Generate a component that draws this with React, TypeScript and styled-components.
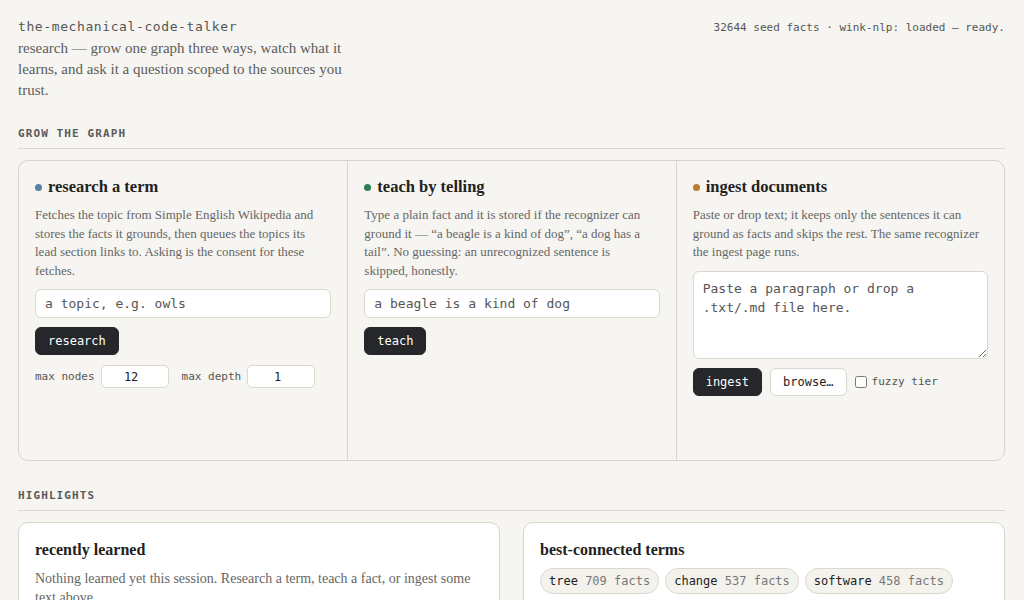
import * as React from 'react';
import styled, { createGlobalStyle } from 'styled-components';

const Global = createGlobalStyle`
  html, body {
    margin: 0;
    background: #f6f5f1;
  }
  body {
    font-family: "Liberation Serif", serif;
    color: #2a2a2a;
  }
`;

const MONO = `"DejaVu Sans Mono", monospace`;
const SERIF = `"Liberation Serif", serif`;

const Page = styled.div`
  padding: 18px 19px 0 18px;
`;

const Header = styled.header`
  display: flex;
  justify-content: space-between;
  align-items: flex-start;
`;

const Brand = styled.div`
  max-width: 340px;
`;

const Title = styled.div`
  font-family: ${MONO};
  font-size: 13px;
  color: #555;
  letter-spacing: 0.6px;
  line-height: 17px;
`;

const Lede = styled.p`
  margin: 3px 0 0;
  font-family: ${SERIF};
  font-size: 15px;
  line-height: 21px;
  color: #5c5c5c;
`;

const Status = styled.div`
  font-family: ${MONO};
  font-size: 11px;
  color: #555;
  padding-top: 3px;
`;

const SectionHead = styled.h2`
  margin: 0;
  font-family: ${MONO};
  font-size: 11px;
  font-weight: 700;
  letter-spacing: 1.1px;
  color: #5a5a5a;
  padding-bottom: 8px;
  border-bottom: 1px solid #dcd7cf;
`;

const Grow = styled.section`
  margin-top: 26px;
`;

const Panels = styled.div`
  margin-top: 11px;
  display: grid;
  grid-template-columns: repeat(3, 1fr);
  border: 1px solid #dad5cc;
  border-radius: 10px;
  height: 301px;
  box-sizing: border-box;
`;

const Panel = styled.div`
  padding: 16px 16px;
  border-left: 1px solid #dad5cc;
  &:first-child {
    border-left: none;
  }
`;

const PanelTitle = styled.h3`
  margin: 0;
  font-family: ${SERIF};
  font-size: 16.5px;
  font-weight: 700;
  color: #222;
  display: flex;
  align-items: center;
  gap: 6px;
  line-height: 20px;
`;

const Dot = styled.span<{ $c: string }>`
  width: 7px;
  height: 7px;
  border-radius: 50%;
  background: ${p => p.$c};
  display: inline-block;
`;

const Desc = styled.p<{ $measure?: number }>`
  margin: 9px 0 0;
  max-width: ${p => (p.$measure ? `${p.$measure}px` : 'none')};
  font-family: ${SERIF};
  font-size: 13px;
  line-height: 18.6px;
  color: #666;
`;

const Field = styled.input`
  display: block;
  margin-top: 9px;
  width: 100%;
  box-sizing: border-box;
  height: 29px;
  padding: 0 9px;
  border: 1px solid #dcd7cf;
  border-radius: 6px;
  background: #fff;
  font-family: ${MONO};
  font-size: 13px;
  color: #333;
  &::placeholder {
    color: #555;
  }
`;

const Area = styled.textarea`
  display: block;
  margin-top: 9px;
  width: 100%;
  box-sizing: border-box;
  height: 88px;
  padding: 7px 9px;
  border: 1px solid #dcd7cf;
  border-radius: 6px;
  background: #fff;
  font-family: ${MONO};
  font-size: 13px;
  line-height: 19px;
  resize: vertical;
  &::placeholder {
    color: #555;
  }
`;

const Row = styled.div`
  display: flex;
  align-items: center;
  gap: 8px;
  margin-top: 9px;
`;

const Btn = styled.button<{ $ghost?: boolean }>`
  height: 28px;
  padding: 0 12px;
  border-radius: 6px;
  font-family: ${MONO};
  font-size: 12px;
  font-weight: 400;
  cursor: pointer;
  border: 1px solid ${p => (p.$ghost ? '#dcd7cf' : '#25272b')};
  background: ${p => (p.$ghost ? '#fff' : '#25272b')};
  color: ${p => (p.$ghost ? '#222' : '#fff')};
`;

const Knobs = styled.div`
  display: flex;
  align-items: center;
  margin-top: 10px;
`;

const Knob = styled.label`
  display: flex;
  align-items: center;
  gap: 6px;
  font-family: ${MONO};
  font-size: 11px;
  color: #555;
  & + & {
    margin-left: 13px;
  }
`;

const Num = styled.input`
  width: 68px;
  height: 23px;
  box-sizing: border-box;
  border: 1px solid #dcd7cf;
  border-radius: 5px;
  background: #fff;
  text-align: center;
  font-family: ${MONO};
  font-size: 12px;
  color: #222;
  padding: 0 0 0 8px;
`;

const Check = styled.label`
  display: flex;
  align-items: center;
  gap: 5px;
  font-family: ${MONO};
  font-size: 11px;
  color: #555;
  input {
    margin: 0;
    width: 12px;
    height: 12px;
  }
`;

const Highlights = styled.section`
  margin-top: 28px;
`;

const Cards = styled.div`
  margin-top: 11px;
  display: grid;
  grid-template-columns: 1fr 1fr;
  gap: 23px;
`;

const Card = styled.div`
  background: #fff;
  border: 1px solid #dad5cc;
  border-radius: 10px;
  padding: 17px 16px 16px;
  min-height: 90px;
`;

const CardTitle = styled.h3`
  margin: 0;
  font-family: ${SERIF};
  font-size: 16px;
  font-weight: 700;
  color: #222;
  line-height: 20px;
`;

const CardText = styled.p`
  margin: 9px 0 0;
  font-family: ${SERIF};
  font-size: 14px;
  line-height: 19px;
  color: #666;
`;

const Chips = styled.div`
  display: flex;
  flex-wrap: wrap;
  gap: 6px;
  margin-top: 8px;
`;

const Chip = styled.span`
  display: inline-flex;
  align-items: center;
  height: 26px;
  padding: 0 8px;
  box-sizing: border-box;
  border: 1px solid #dcd7cf;
  border-radius: 13px;
  background: #f4f2ed;
  font-family: ${MONO};
  font-size: 12px;
  color: #222;
  white-space: pre;
  em {
    font-style: normal;
    color: #777;
  }
`;

const terms = [
  { t: 'tree', n: 709 },
  { t: 'change', n: 537 },
  { t: 'software', n: 458 },
];

export default function App() {
  return (
    <Page>
      <Global />
      <Header>
        <Brand>
          <Title>the-mechanical-code-talker</Title>
          <Lede>
            research — grow one graph three ways, watch what it learns, and ask it a question
            scoped to the sources you trust.
          </Lede>
        </Brand>
        <Status>32644 seed facts · wink-nlp: loaded — ready.</Status>
      </Header>

      <Grow>
        <SectionHead>GROW THE GRAPH</SectionHead>
        <Panels>
          <Panel>
            <PanelTitle>
              <Dot $c="#5b7fab" />
              research a term
            </PanelTitle>
            <Desc $measure={284}>
              Fetches the topic from Simple English Wikipedia and stores the facts it grounds,
              then queues the topics its lead section links to. Asking is the consent for these
              fetches.
            </Desc>
            <Field placeholder="a topic, e.g. owls" />
            <Row>
              <Btn>research</Btn>
            </Row>
            <Knobs>
              <Knob>
                max nodes <Num type="number" defaultValue={12} />
              </Knob>
              <Knob>
                max depth <Num type="number" defaultValue={1} />
              </Knob>
            </Knobs>
          </Panel>
          <Panel>
            <PanelTitle>
              <Dot $c="#2f7d53" />
              teach by telling
            </PanelTitle>
            <Desc $measure={284}>
              Type a plain fact and it is stored if the recognizer can ground it — “a beagle is a
              kind of dog”, “a dog has a tail”. No guessing: an unrecognized sentence is skipped,
              honestly.
            </Desc>
            <Field placeholder="a beagle is a kind of dog" />
            <Row>
              <Btn>teach</Btn>
            </Row>
          </Panel>
          <Panel>
            <PanelTitle>
              <Dot $c="#b87d2e" />
              ingest documents
            </PanelTitle>
            <Desc>
              Paste or drop text; it keeps only the sentences it can ground as facts and skips the
              rest. The same recognizer the ingest page runs.
            </Desc>
            <Area placeholder="Paste a paragraph or drop a .txt/.md file here." />
            <Row>
              <Btn>ingest</Btn>
              <Btn $ghost>browse…</Btn>
              <Check>
                <input type="checkbox" /> fuzzy tier
              </Check>
            </Row>
          </Panel>
        </Panels>
      </Grow>

      <Highlights>
        <SectionHead>HIGHLIGHTS</SectionHead>
        <Cards>
          <Card>
            <CardTitle>recently learned</CardTitle>
            <CardText>
              Nothing learned yet this session. Research a term, teach a fact, or ingest some text
              above.
            </CardText>
          </Card>
          <Card>
            <CardTitle>best-connected terms</CardTitle>
            <Chips>
              {terms.map(x => (
                <Chip key={x.t}>
                  {x.t} <em>{x.n} facts</em>
                </Chip>
              ))}
            </Chips>
          </Card>
        </Cards>
      </Highlights>
    </Page>
  );
}
